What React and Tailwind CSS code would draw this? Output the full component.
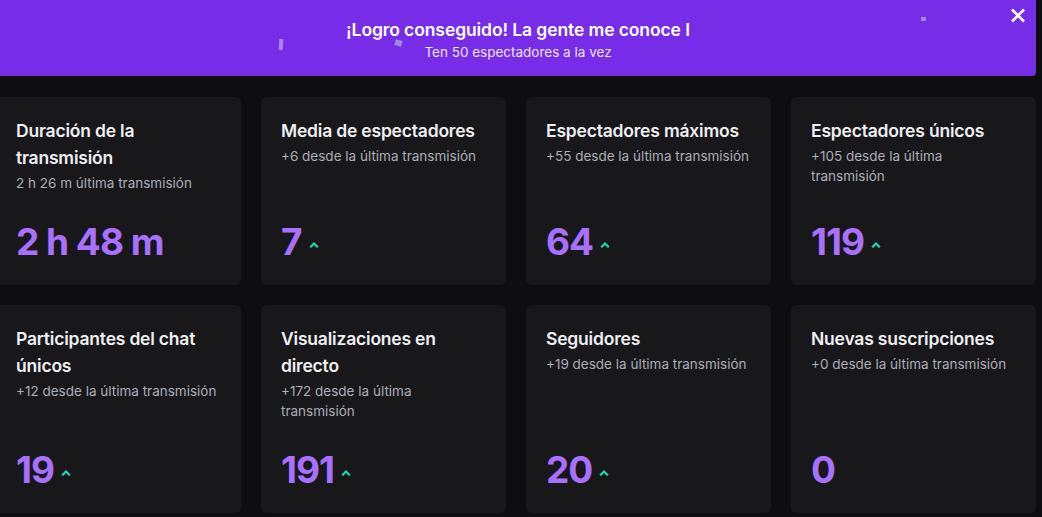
import React from "react";

const cards = [
  { title: "Duración de la transmisión", sub: "2 h 26 m última transmisión", value: "2 h 48 m", up: false },
  { title: "Media de espectadores", sub: "+6 desde la última transmisión", value: "7", up: true },
  { title: "Espectadores máximos", sub: "+55 desde la última transmisión", value: "64", up: true },
  { title: "Espectadores únicos", sub: "+105 desde la última transmisión", value: "119", up: true },
  { title: "Participantes del chat únicos", sub: "+12 desde la última transmisión", value: "19", up: true },
  { title: "Visualizaciones en directo", sub: "+172 desde la última transmisión", value: "191", up: true },
  { title: "Seguidores", sub: "+19 desde la última transmisión", value: "20", up: true },
  { title: "Nuevas suscripciones", sub: "+0 desde la última transmisión", value: "0", up: false },
];

function Caret() {
  return (
    <svg width="10" height="7" viewBox="0 0 10 7" className="ml-[7px] mt-[6px]">
      <path d="M2 5.5 L5 2.5 L8 5.5" fill="none" stroke="#1cd6b4" strokeWidth="2.2" strokeLinecap="square" />
    </svg>
  );
}

function Card({ c }) {
  return (
    <div className="bg-[#18181b] rounded-[6px] pl-5 pr-[18px] pt-5 pb-[21px] flex flex-col">
      <div className="text-[17.5px] leading-[27px] font-semibold text-[#efeff1] tracking-[-0.2px]">{c.title}</div>
      <div className="mt-[2px] text-[13.5px] leading-[20px] text-[#adadb8]">{c.sub}</div>
      <div className="mt-auto pt-[26px] flex items-center">
        <span className="text-[37px] leading-[45px] font-bold text-[#a970ff] tracking-[-1px]">{c.value}</span>
        {c.up && <Caret />}
      </div>
    </div>
  );
}

export default function App() {
  return (
    <div className="w-[1042px] h-[517px] bg-[#0e0e10] overflow-hidden" style={{ fontFamily: "Inter, 'Noto Sans', sans-serif" }}>
      <div className="relative w-[1036px] h-[76px] bg-[#772ce8] rounded-br-[4px] flex flex-col items-center pt-[18px]">
        <div className="text-[17.5px] leading-[24px] font-semibold text-white tracking-[-0.1px]">¡Logro conseguido! La gente me conoce I</div>
        <div className="text-[13.5px] leading-[18px] text-[#ece4fb] mt-[1px]">Ten 50 espectadores a la vez</div>
        <div className="absolute left-[279px] top-[39px] w-[4px] h-[11px] bg-[#b49cf0] opacity-80 rotate-[4deg]" />
        <div className="absolute left-[395px] top-[40px] w-[7px] h-[6px] bg-[#9f8ad8] rotate-[15deg]" />
        <div className="absolute left-[921px] top-[17px] w-[5px] h-[4px] bg-[#a08ad6]" />
        <svg className="absolute left-[1010px] top-[8px]" width="16" height="15" viewBox="0 0 16 15">
          <path d="M2 1.5 L14 13.5 M14 1.5 L2 13.5" stroke="white" strokeWidth="2.6" />
        </svg>
      </div>
      <div className="-ml-[4px] mt-[21px] w-[1040px] grid grid-cols-[repeat(4,245px)] gap-x-5 gap-y-5">
        {cards.map((c, i) => (
          <Card key={i} c={c} />
        ))}
      </div>
    </div>
  );
}
